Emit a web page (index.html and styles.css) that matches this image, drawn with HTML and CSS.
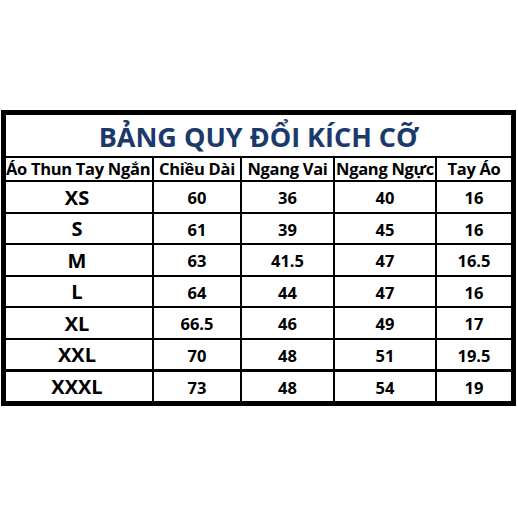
FILE: index.html
```html
<!DOCTYPE html>
<html lang="vi">
<head>
<meta charset="utf-8">
<title>Bảng quy đổi kích cỡ</title>
<link rel="stylesheet" href="styles.css">
</head>
<body>
<div class="chart">
  <div class="title">BẢNG QUY ĐỔI KÍCH CỠ</div>
  <div class="head first">Áo Thun Tay Ngắn</div>
  <div class="head">Chiều Dài</div>
  <div class="head">Ngang Vai</div>
  <div class="head">Ngang Ngực</div>
  <div class="head">Tay Áo</div>

  <div class="size">XS</div><div class="num">60</div><div class="num">36</div><div class="num">40</div><div class="num">16</div>
  <div class="size">S</div><div class="num">61</div><div class="num">39</div><div class="num">45</div><div class="num">16</div>
  <div class="size">M</div><div class="num">63</div><div class="num">41.5</div><div class="num">47</div><div class="num">16.5</div>
  <div class="size">L</div><div class="num">64</div><div class="num">44</div><div class="num">47</div><div class="num">16</div>
  <div class="size">XL</div><div class="num">66.5</div><div class="num">46</div><div class="num">49</div><div class="num">17</div>
  <div class="size">XXL</div><div class="num">70</div><div class="num">48</div><div class="num">51</div><div class="num">19.5</div>
  <div class="size last">XXXL</div><div class="num last">73</div><div class="num last">48</div><div class="num last">54</div><div class="num last">19</div>
</div>
</body>
</html>
```

FILE: styles.css
```css
html, body {
  margin: 0;
  padding: 0;
  background: #ffffff;
}

body {
  width: 518px;
  height: 518px;
  font-family: "Open Sans", "Noto Sans", sans-serif;
  color: #000;
}

.chart {
  margin: 110px 0 0 1px;
  width: 505px;
  display: grid;
  grid-template-columns: 146px 86px 91px 100px 74px;
  grid-template-rows: 41px 22px repeat(7, 29.5px);
  gap: 2px;
  background: #000;
  border: 5px solid #000;
}

.chart > div {
  background: #fff;
  display: flex;
  align-items: center;
  justify-content: center;
  white-space: nowrap;
  font-weight: 700;
  line-height: 1;
}

.title {
  grid-column: 1 / -1;
  font-size: 27px;
  color: #1b3a6b;
  padding-top: 2px;
}

.head {
  font-size: 16.5px;
  letter-spacing: -0.3px;
}

.head.first {
  justify-content: flex-start;
  padding-left: 0;
}

.size {
  font-size: 20px;
  padding: 2px 4px 0 0;
}

.num {
  font-size: 16.5px;
  padding-top: 3px;
}

.last {
  margin-top: 1px;
}
```
